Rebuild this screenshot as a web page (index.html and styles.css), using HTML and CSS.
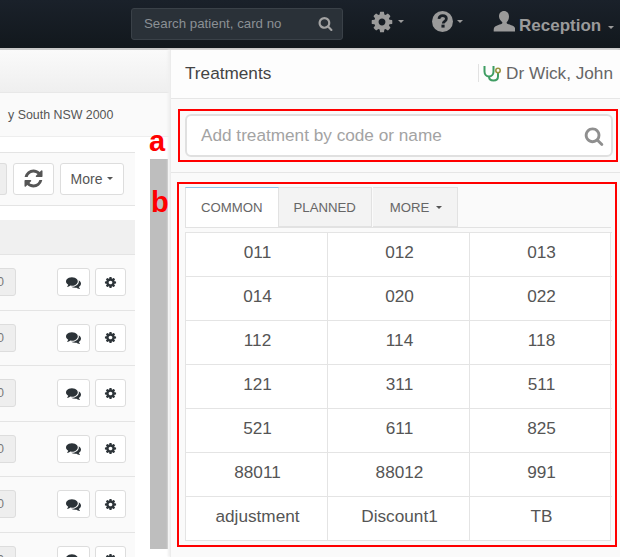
FILE: index.html
```html
<!DOCTYPE html>
<html lang="en">
<head>
<meta charset="utf-8">
<title>Treatments</title>
<link rel="stylesheet" href="styles.css">
</head>
<body>
<svg class="defs" width="0" height="0" aria-hidden="true">
  <symbol id="i-cog" viewBox="0 0 1792 1792"><path d="M1152 896q0-106-75-181t-181-75-181 75-75 181 75 181 181 75 181-75 75-181zm512-109v222q0 12-8 23t-20 13l-185 28q-19 54-39 91 35 50 107 138 10 12 10 25t-9 23q-27 37-99 108t-94 71q-12 0-26-9l-138-108q-44 23-91 38-16 136-29 186-7 28-36 28h-222q-14 0-24.500-8.500t-11.500-21.500l-28-184q-49-16-90-37l-141 107q-10 9-25 9-14 0-25-11-126-114-165-168-7-10-7-23 0-12 8-23 15-21 51-66.500t54-70.500q-27-50-41-99l-183-27q-13-2-21-12.500t-8-23.500v-222q0-12 8-23t19-13l186-28q14-46 39-92-40-57-107-138-10-12-10-24 0-10 9-23 26-36 98.500-107.500t94.500-71.500q13 0 26 10l138 107q44-23 91-38 16-136 29-186 7-28 36-28h222q14 0 24.500 8.500t11.500 21.500l28 184q49 16 90 37l142-107q9-9 24-9 13 0 25 10 129 119 165 170 7 8 7 22 0 12-8 23-15 21-51 66.500t-54 70.500q26 50 41 98l183 28q13 2 21 12.500t8 23.500z"/></symbol>
  <symbol id="i-search" viewBox="0 0 1792 1792"><path d="M1216 832q0-185-131.500-316.500t-316.500-131.500-316.500 131.500-131.500 316.500 131.500 316.500 316.500 131.500 316.500-131.500 131.500-316.500zm512 832q0 52-38 90t-90 38q-54 0-90-38l-343-342q-179 124-399 124-143 0-273.500-55.500t-225-150-150-225-55.500-273.500 55.500-273.500 150-225 225-150 273.500-55.500 273.500 55.500 225 150 150 225 55.500 273.500q0 220-124 399l343 343q37 37 37 90z"/></symbol>
  <symbol id="i-comments" viewBox="0 0 1792 1792"><path d="M1408 768q0 139-94 257t-256.500 186.500-353.500 68.500q-86 0-176-16-124 88-278 128-36 9-86 16h-3q-11 0-20.500-8t-11.500-21q-1-3-1-6.500t.5-6.500 2-6l2.500-5 3.500-5.500 4-5 4.500-5 4-4.500q5-6 23-25t26-29.500 22.500-29 25-38.500 20.500-44q-124-72-195-177t-71-224q0-139 94-257t256.500-186.500 353.500-68.500 353.500 68.500 256.500 186.500 94 257zm384 256q0 120-71 224.500t-195 176.500q10 24 20.500 44t25 38.500 22.500 29 26 29.500 23 25q1 1 4 4.500t4.500 5 4 5 3.500 5.500l2.500 5 2 6 .5 6.500-1 6.500q-3 14-13 22t-22 7q-50-7-86-16-154-40-278-128-90 16-176 16-271 0-472-132 58 4 88 4 161 0 309-45t264-129q125-92 192-212t67-254q0-77-23-152 129 71 204 178t75 230z"/></symbol>
  <symbol id="i-refresh" viewBox="0 0 1792 1792"><path d="M1639 1056q0 5-1 7-64 268-268 434.500t-478 166.500q-146 0-282.500-55t-243.500-157l-129 129q-19 19-45 19t-45-19-19-45v-448q0-26 19-45t45-19h448q26 0 45 19t19 45-19 45l-137 137q71 66 161 102t187 36q134 0 250-65t186-179q11-17 53-117 8-23 30-23h192q13 0 22.500 9.500t9.500 22.500zm25-800v448q0 26-19 45t-45 19h-448q-26 0-45-19t-19-45 19-45l138-138q-148-137-349-137-134 0-250 65t-186 179q-11 17-53 117-8 23-30 23h-199q-13 0-22.500-9.500t-9.500-22.500v-7q65-268 270-434.500t480-166.500q146 0 284 55.500t245 156.500l130-129q19-19 45-19t45 19 19 45z"/></symbol>
</svg>

<header class="nav">
  <div class="nav-search">
    <span class="nav-search-text">Search patient, card no</span>
    <svg class="nav-search-icon"><use href="#i-search"/></svg>
  </div>
  <div class="nav-item nav-cog">
    <svg class="nav-icon-cog"><use href="#i-cog"/></svg>
    <span class="caret"></span>
  </div>
  <div class="nav-item nav-help">
    <svg class="nav-icon" viewBox="0 0 20 20">
      <circle cx="10" cy="10" r="10" class="help-disc"/>
      <path d="M6.600 7.600c.2-2 1.700-3.200 3.600-3.200 2 0 3.500 1.200 3.500 3 0 2.500-3 2.500-3 4.500" class="help-mark"/>
      <rect x="9" y="13" width="3" height="2.800" class="help-dot"/>
    </svg>
    <span class="caret"></span>
  </div>
  <div class="nav-item nav-user">
    <svg class="user-icon" viewBox="0 0 22 22">
      <path d="M11 0c3.100 0 5 2.300 5 5.500 0 2.300-.9 4.300-2.100 5.500-.5.600-.4 1.500.3 1.800 2.700 1.100 7 2 7.800 4.200.3 1 .3 2.600.3 3.500H.7c0-.9 0-2.500.3-3.500.8-2.200 5.100-3.100 7.800-4.200.7-.3.800-1.200.3-1.800C7.900 9.800 6 7.800 6 5.500 6 2.300 7.900 0 11 0z"/>
    </svg>
    <span class="user-name">Reception</span>
    <span class="caret"></span>
  </div>
</header>

<main class="app">
  <section class="left">
    <div class="left-head"></div>
    <div class="address">y South NSW 2000</div>
    <div class="left-body">
      <div class="list">
        <div class="toolbar">
          <button class="btn btn-grey-stub"></button>
          <button class="btn btn-refresh"><svg class="refresh-icon"><use href="#i-refresh"/></svg></button>
          <button class="btn btn-more">More <span class="caret caret-dark"></span></button>
        </div>
        <div class="list-head"></div>
        <div class="row"><button class="btn zero">0</button><button class="btn btn-chat"><svg class="row-icon"><use href="#i-comments"/></svg></button><button class="btn btn-cog"><svg class="row-icon"><use href="#i-cog"/></svg></button></div>
        <div class="row"><button class="btn zero">0</button><button class="btn btn-chat"><svg class="row-icon"><use href="#i-comments"/></svg></button><button class="btn btn-cog"><svg class="row-icon"><use href="#i-cog"/></svg></button></div>
        <div class="row"><button class="btn zero">0</button><button class="btn btn-chat"><svg class="row-icon"><use href="#i-comments"/></svg></button><button class="btn btn-cog"><svg class="row-icon"><use href="#i-cog"/></svg></button></div>
        <div class="row"><button class="btn zero">0</button><button class="btn btn-chat"><svg class="row-icon"><use href="#i-comments"/></svg></button><button class="btn btn-cog"><svg class="row-icon"><use href="#i-cog"/></svg></button></div>
        <div class="row"><button class="btn zero">0</button><button class="btn btn-chat"><svg class="row-icon"><use href="#i-comments"/></svg></button><button class="btn btn-cog"><svg class="row-icon"><use href="#i-cog"/></svg></button></div>
        <div class="row"><button class="btn zero">0</button><button class="btn btn-chat"><svg class="row-icon"><use href="#i-comments"/></svg></button><button class="btn btn-cog"><svg class="row-icon"><use href="#i-cog"/></svg></button></div>
      </div>
      <div class="scrollbar"></div>
    </div>
  </section>

  <section class="right">
    <div class="right-head">
      <span class="right-title">Treatments</span>
      <span class="doctor">
        <svg class="steth" viewBox="0 0 19 17">
          <path class="steth-green" d="M1.500 1v5.500c0 3 2 5 4.500 5s4.500-2 4.500-5V1"/>
          <path class="steth-green" d="M6 11.500c0 2.500 2 4 4.500 4s4.500-1.500 4.500-4V8"/>
          <circle class="steth-gold" cx="15" cy="5.500" r="2.200"/>
        </svg>
        Dr Wick, John
      </span>
    </div>

    <div class="box-a">
      <div class="add-input">
        <span class="add-text">Add treatment by code or name</span>
        <svg class="add-icon"><use href="#i-search"/></svg>
      </div>
    </div>
    <div class="divider"></div>
    <div class="box-b">
      <div class="tabs">
        <div class="tab tab-active">COMMON</div>
        <div class="tab">PLANNED</div>
        <div class="tab tab-more">MORE <span class="caret caret-dark"></span></div>
      </div>
      <div class="grid">
        <div class="cell">011</div><div class="cell">012</div><div class="cell">013</div>
        <div class="cell">014</div><div class="cell">020</div><div class="cell">022</div>
        <div class="cell">112</div><div class="cell">114</div><div class="cell">118</div>
        <div class="cell">121</div><div class="cell">311</div><div class="cell">511</div>
        <div class="cell">521</div><div class="cell">611</div><div class="cell">825</div>
        <div class="cell">88011</div><div class="cell">88012</div><div class="cell">991</div>
        <div class="cell">adjustment</div><div class="cell">Discount1</div><div class="cell">TB</div>
      </div>
    </div>
  </section>

  <span class="mark mark-a">a</span>
  <span class="mark mark-b">b</span>
</main>
</body>
</html>
```

FILE: styles.css
```css
* { box-sizing: border-box; }
html, body { margin: 0; padding: 0; }
body {
  width: 620px;
  height: 557px;
  overflow: hidden;
  background: #fff;
  font-family: "Liberation Sans", Arial, sans-serif;
  color: #555;
}
.defs { position: absolute; }

.nav {
  height: 50px;
  display: flex;
  align-items: center;
  padding-left: 131px;
  background: linear-gradient(#1a212a, #12181d);
  border-bottom: 2px solid #c9c9c9;
}
.nav > * { flex: none; }
.nav-search {
  width: 212px;
  height: 32px;
  margin-top: -1px;
  display: flex;
  align-items: center;
  justify-content: space-between;
  padding: 0 9px 0 12px;
  background: #2a3138;
  border: 1px solid #3a4148;
  border-radius: 3px;
}
.nav-search-text { font-size: 13.300px; color: #8b9095; }
.nav-search-icon { width: 15px; height: 15px; fill: #a3a3a3; }
.nav-item { display: flex; align-items: center; color: #9a9a9a; fill: #9a9a9a; }
.nav-cog { margin-left: 27px; margin-top: -5px; }
.nav-help { margin-left: 28px; margin-top: -5px; }
.nav-user { margin-left: 30px; margin-top: 4px; }
.nav-icon { width: 21px; height: 21px; }
.nav-icon-cog { width: 24px; height: 24px; }
.help-disc { fill: #9a9a9a; }
.help-mark { fill: none; stroke: #181e25; stroke-width: 2.600; }
.help-dot { fill: #181e25; }
.user-icon { width: 22px; height: 22px; margin-top: -8px; }
.user-name { margin-left: 4px; font-size: 17px; font-weight: bold; color: #9a9a9a; }
.caret {
  display: inline-block;
  width: 0;
  height: 0;
  margin-left: 4px;
  border-top: 3px solid #9a9a9a;
  border-left: 3px solid transparent;
  border-right: 3px solid transparent;
  vertical-align: middle;
}
.nav-user .caret { margin-left: 7px; margin-top: 3px; }
.caret-dark { border-top-color: #555; margin-left: 2px; }

.app {
  position: relative;
  display: grid;
  grid-template-columns: 170px 450px;
  height: 507px;
}

.left { overflow: hidden; background: #fff; }
.left-head {
  height: 43px;
  background: linear-gradient(#fafafa, #efefef);
  border-bottom: 1px solid #e8e8e8;
}
.address {
  height: 44px;
  padding: 12px 0 0 8px;
  font-size: 12.400px;
  line-height: 20px;
  color: #555;
  white-space: nowrap;
  background: #fafafa;
  border-bottom: 1px solid #eee;
}
.left-body { display: flex; height: 420px; }
.list { width: 135px; margin-top: 15px; flex: none; }
.toolbar {
  height: 54px;
  display: flex;
  align-items: center;
  gap: 6px;
  background: #fafafa;
  border-top: 1px solid #e4e4e4;
  border-bottom: 1px solid #e4e4e4;
}
.btn {
  padding: 0;
  height: 28px;
  font-family: inherit;
  background: #fff;
  border: 1px solid #ddd;
  border-radius: 3px;
  color: #555;
  display: flex;
  align-items: center;
  justify-content: center;
}
.toolbar .btn { height: 32px; margin-top: -1px; }
.btn-grey-stub { width: 10px; margin-left: -3px; background: #eee; border-left: 0; border-radius: 0 3px 3px 0; }
.btn-refresh { width: 41px; }
.refresh-icon { width: 21px; height: 21px; fill: #555; }
.btn-more { width: 64px; font-size: 14px; gap: 3px; }
.list-head {
  height: 35px;
  margin-top: 14px;
  background: #f0f0f0;
  border-bottom: 1px solid #e4e4e4;
}
.row {
  height: 55.500px;
  display: flex;
  align-items: center;
  background: #fafafa;
  border-bottom: 1px solid #e4e4e4;
  padding-right: 9px;
}
.zero {
  width: 36px;
  margin-left: -20px;
  margin-right: auto;
  justify-content: flex-end;
  padding-right: 11px;
  font-size: 12px;
  color: #777;
  background: #eee;
}
.btn-chat { width: 33px; margin-right: 5px; }
.btn-cog { width: 31px; }
.row-icon { width: 13px; height: 13px; fill: #2c3338; }
.btn-chat .row-icon { width: 15px; height: 15px; }
.scrollbar {
  width: 18px;
  height: 390px;
  margin: 22px 0 0 15px;
  flex: none;
  background: #bebebe;
}

.right {
  background: #fafafa;
  border-left: 1px solid #ececec;
  box-shadow: -2px 0 2px #efefef;
}
.right-head {
  height: 49px;
  display: flex;
  align-items: center;
  justify-content: space-between;
  padding: 0 7px 2px 14px;
  background: #fdfdfd;
  border-bottom: 1px solid #e6e6e6;
}
.right-title { font-size: 17.200px; color: #444; }
.doctor {
  display: flex;
  align-items: center;
  gap: 4px;
  padding-left: 4px;
  font-size: 17.200px;
  color: #666;
  border-left: 1px solid #e2e2e2;
  line-height: 18px;
}
.steth { width: 19px; height: 17px; }
.steth-green { fill: none; stroke: #3f9d63; stroke-width: 2; }
.steth-gold { fill: none; stroke: #9a9440; stroke-width: 1.600; }

.box-a {
  width: 440px;
  height: 53px;
  margin: 10px 0 0 7px;
  padding: 3px 3px 3px 5px;
  border: 2px solid #f00;
}
.add-input {
  height: 43px;
  display: flex;
  align-items: center;
  justify-content: space-between;
  padding: 0 7px 0 14px;
  background: #fff;
  border: 2px solid #e0e0e0;
  border-radius: 6px;
}
.add-text { font-size: 17.200px; color: #a3a3a3; }
.add-icon { width: 20px; height: 20px; fill: #8f8f8f; }
.divider { height: 1px; margin-top: 10px; background: #e6e6e6; }
.box-b {
  width: 440px;
  height: 365px;
  margin: 9px 0 0 6px;
  padding: 3px 4px 0 6px;
  border: 2px solid #f00;
}
.tabs {
  display: flex;
  height: 41px;
  border-bottom: 1px solid #e2e2e2;
}
.tab {
  height: 40px;
  padding: 0 15px;
  display: flex;
  align-items: center;
  font-size: 13.200px;
  color: #666;
  background: #f3f3f3;
  border: 1px solid #e2e2e2;
  border-left-width: 0;
}
.tab-more { margin-left: 1px; padding: 0 15px 0 17px; gap: 5px; }
.tab-active {
  background: #fff;
  border-top: 1px solid #8fc4ea;
  border-left: 1px solid #e2e2e2;
  border-right-color: #e2e2e2;
  border-bottom: 0;
}
.grid {
  display: grid;
  grid-template-columns: 142px 142px 143px;
  grid-auto-rows: 44px;
  margin-top: 4px;
  background: #fff;
  border-right: 1px solid #e4e4e4;
  border-bottom: 1px solid #e4e4e4;
}
.cell {
  display: flex;
  align-items: center;
  justify-content: center;
  padding: 0 0 5px 2px;
  font-size: 17.200px;
  color: #555;
  border-top: 1px solid #e4e4e4;
  border-left: 1px solid #e4e4e4;
}
.cell:nth-child(3n) { padding-left: 1px; }

.mark {
  position: absolute;
  font-size: 29px;
  font-weight: bold;
  line-height: 1;
  color: #f00;
}
.mark-a { left: 149px; top: 77px; }
.mark-b { left: 151px; top: 138px; }
```
